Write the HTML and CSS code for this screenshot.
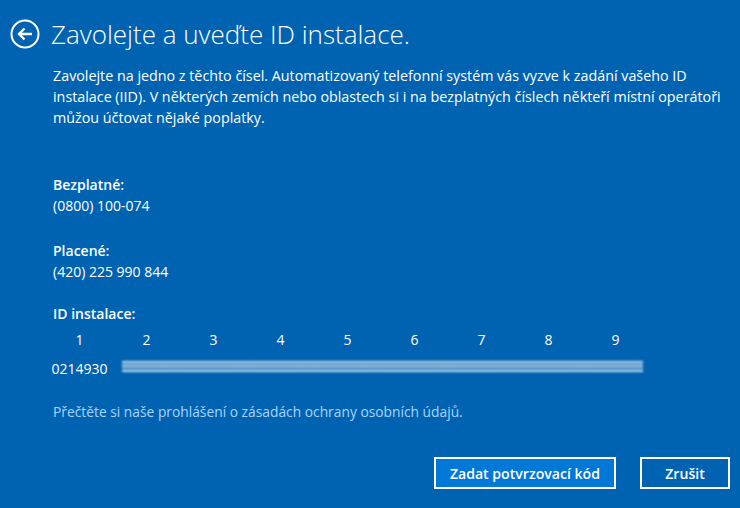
FILE: index.html
```html
<!DOCTYPE html>
<html lang="cs">
<head>
    <meta charset="UTF-8">
    <title>Zavolejte a uveďte ID instalace.</title>
    <link rel="stylesheet" href="styles.css">
</head>
<body>
    <div class="dialog">
        <header class="title-bar">
            <svg class="back" width="30" height="30" viewBox="0 0 30 30">
                <circle cx="15" cy="15" r="13.5" fill="none" stroke="#fff" stroke-width="2"/>
                <path d="M22 15 H9 M14.5 9.5 L9 15 L14.5 20.5" fill="none" stroke="#fff" stroke-width="2.4"/>
            </svg>
            <h1>Zavolejte a uveďte ID instalace.</h1>
        </header>

        <section class="content">
            <p class="intro">Zavolejte na jedno z těchto čísel. Automatizovaný telefonní systém vás vyzve k zadání vašeho ID instalace (IID). V některých zemích nebo oblastech si i na bezplatných číslech někteří místní operátoři můžou účtovat nějaké poplatky.</p>

            <div class="phone">
                <div class="label">Bezplatné:</div>
                <div class="value">(0800) 100-074</div>
            </div>

            <div class="phone">
                <div class="label">Placené:</div>
                <div class="value">(420) 225 990 844</div>
            </div>

            <div class="label">ID instalace:</div>
            <div class="iid">
                <span>1</span><span>2</span><span>3</span><span>4</span><span>5</span><span>6</span><span>7</span><span>8</span><span>9</span>
                <span>0214930</span>
                <div class="hidden-id"></div>
            </div>

            <a class="privacy" href="#">Přečtěte si naše prohlášení o zásadách ochrany osobních údajů.</a>
        </section>

        <footer class="buttons">
            <button class="primary">Zadat potvrzovací kód</button>
            <button>Zrušit</button>
        </footer>
    </div>
</body>
</html>
```

FILE: styles.css
```css
html, body {
    margin: 0;
    height: 100%;
}

body {
    background-color: #0063b1;
    color: #fff;
    font-family: 'Open Sans', sans-serif;
}

.dialog {
    height: 508px;
    display: flex;
    flex-direction: column;
}

.title-bar {
    display: flex;
    align-items: center;
    gap: 11px;
    padding: 19px 0 0 10px;
}

.title-bar h1 {
    margin: 0;
    font-size: 26px;
    font-weight: 300;
    line-height: 30px;
}

.content {
    padding: 16px 0 0 53px;
    flex: 1;
}

.intro {
    margin: 0;
    width: 680px;
    font-size: 14.3px;
    line-height: 21px;
}

.phone {
    margin-top: 46px;
}

.phone + .phone {
    margin-top: 24px;
}

.label {
    font-size: 14px;
    font-weight: 600;
    line-height: 21px;
}

.phone + .label {
    margin-top: 21px;
}

.value {
    font-size: 14px;
    line-height: 21px;
}

.iid {
    display: grid;
    grid-template-columns: repeat(9, 67px);
    row-gap: 8px;
    margin: 5px 0 0 -7px;
    font-size: 14px;
    line-height: 21px;
    position: relative;
}

.iid span {
    text-align: center;
}

.hidden-id {
    position: absolute;
    left: 76px;
    top: 32px;
    width: 521px;
    height: 11px;
    background:
        linear-gradient(180deg, rgba(255,255,255,0.85) 0 1px, rgba(255,255,255,0.3) 2px 3px, rgba(255,255,255,0.55) 4px 6px, rgba(255,255,255,0.3) 7px 9px, rgba(255,255,255,0.85) 10px 11px),
        repeating-linear-gradient(90deg, rgba(0,99,177,0) 0 40px, rgba(0,99,177,0.35) 55px, rgba(0,99,177,0) 67px);
    filter: blur(1px);
}

.privacy {
    display: block;
    margin-top: 22px;
    color: #a8d4ff;
    text-decoration: none;
    font-size: 13.8px;
    line-height: 21px;
}

.buttons {
    display: flex;
    justify-content: flex-end;
    gap: 24px;
    padding: 0 10px 19px 0;
}

.buttons button {
    height: 32px;
    min-width: 90px;
    padding: 0 14px;
    border: 2px solid #fff;
    background-color: #0063b1;
    color: #fff;
    font-family: 'Open Sans', sans-serif;
    font-size: 14.1px;
    font-weight: 600;
}

.buttons .primary {
    background-color: #0078d7;
}
```
